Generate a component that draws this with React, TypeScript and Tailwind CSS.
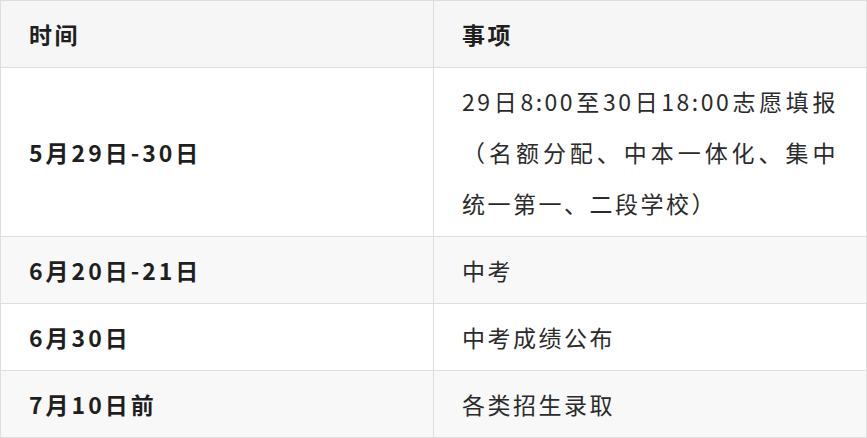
const ROWS = [
  { time: '5月29日-30日', item: '29日8:00至30日18:00志愿填报（名额分配、中本一体化、集中统一第一、二段学校）', shade: false },
  { time: '6月20日-21日', item: '中考', shade: true },
  { time: '6月30日', item: '中考成绩公布', shade: false },
  { time: '7月10日前', item: '各类招生录取', shade: true },
];

export default function App() {
  return (
    <div className="w-[867px] bg-white font-['Noto_Sans_CJK_SC',sans-serif] text-[23px] leading-[51px] tracking-[2.5px] text-[#2b2b2b]">
      <table className="w-[867px] table-fixed border-collapse">
        <thead>
          <tr className="bg-[#f6f6f6]">
            <th className="w-[433px] border border-[#dedede] px-7 pt-2 pb-[7px] text-left font-bold text-[#1f1f1f]">时间</th>
            <th className="border border-[#dedede] px-7 pt-2 pb-[7px] text-left font-bold text-[#1f1f1f]">事项</th>
          </tr>
        </thead>
        <tbody>
          {ROWS.map((row) => (
            <tr key={row.time} className={row.shade ? 'bg-[#f8f8f9]' : 'bg-white'}>
              <td className="border border-[#dedede] px-7 pt-2 pb-[7px] align-middle font-bold tracking-[3px] text-[#1f1f1f]">{row.time}</td>
              <td className="border border-[#dedede] px-7 pt-2 pb-[7px] text-justify">{row.item}</td>
            </tr>
          ))}
        </tbody>
      </table>
    </div>
  );
}
